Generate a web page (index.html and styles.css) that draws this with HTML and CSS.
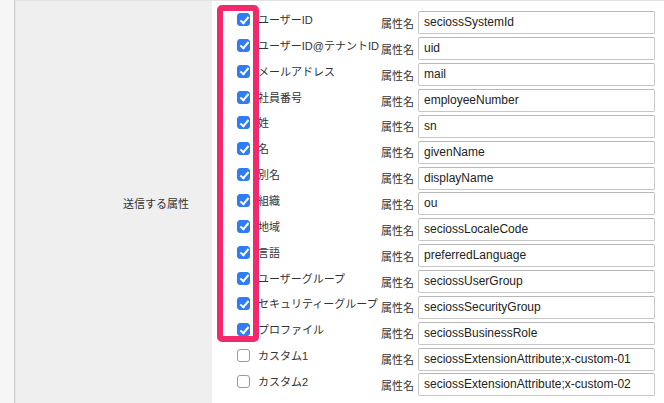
FILE: index.html
```html
<!DOCTYPE html>
<html lang="ja">
<head>
<meta charset="utf-8">
<link rel="stylesheet" href="styles.css">
</head>
<body>
<div class="page">
  <div class="form-table">
    <div class="th">送信する属性</div>
    <div class="td">
      <div class="row"><span class="cb on"></span><span class="lbl">ユーザーID</span><span class="an">属性名</span><span class="inp">seciossSystemId</span></div>
      <div class="row"><span class="cb on"></span><span class="lbl">ユーザーID@テナントID</span><span class="an">属性名</span><span class="inp">uid</span></div>
      <div class="row"><span class="cb on"></span><span class="lbl">メールアドレス</span><span class="an">属性名</span><span class="inp">mail</span></div>
      <div class="row"><span class="cb on"></span><span class="lbl">社員番号</span><span class="an">属性名</span><span class="inp">employeeNumber</span></div>
      <div class="row"><span class="cb on"></span><span class="lbl">姓</span><span class="an">属性名</span><span class="inp">sn</span></div>
      <div class="row"><span class="cb on"></span><span class="lbl">名</span><span class="an">属性名</span><span class="inp">givenName</span></div>
      <div class="row"><span class="cb on"></span><span class="lbl">別名</span><span class="an">属性名</span><span class="inp">displayName</span></div>
      <div class="row"><span class="cb on"></span><span class="lbl">組織</span><span class="an">属性名</span><span class="inp">ou</span></div>
      <div class="row"><span class="cb on"></span><span class="lbl">地域</span><span class="an">属性名</span><span class="inp">seciossLocaleCode</span></div>
      <div class="row"><span class="cb on"></span><span class="lbl">言語</span><span class="an">属性名</span><span class="inp">preferredLanguage</span></div>
      <div class="row"><span class="cb on"></span><span class="lbl">ユーザーグループ</span><span class="an">属性名</span><span class="inp">seciossUserGroup</span></div>
      <div class="row"><span class="cb on"></span><span class="lbl">セキュリティーグループ</span><span class="an">属性名</span><span class="inp">seciossSecurityGroup</span></div>
      <div class="row"><span class="cb on"></span><span class="lbl">プロファイル</span><span class="an">属性名</span><span class="inp">seciossBusinessRole</span></div>
      <div class="row"><span class="cb"></span><span class="lbl">カスタム1</span><span class="an">属性名</span><span class="inp">seciossExtensionAttribute;x-custom-01</span></div>
      <div class="row"><span class="cb"></span><span class="lbl">カスタム2</span><span class="an">属性名</span><span class="inp">seciossExtensionAttribute;x-custom-02</span></div>
    </div>
  </div>
  <div class="highlight"></div>
</div>
</body>
</html>
```

FILE: styles.css
```css
html, body {
  margin: 0;
  padding: 0;
  background: #f6f6f6;
  font-family: "Liberation Sans", "Noto Sans CJK JP", sans-serif;
  color: #333;
  overflow: hidden;
}

.page {
  position: relative;
  width: 664px;
  height: 403px;
  overflow: hidden;
}

.form-table {
  margin-left: 14px;
  width: 700px;
  display: grid;
  grid-template-columns: 197px 1fr;
  border-top: 1px solid #e2e2e2;
  border-left: 1px solid #cfcfcf;
}

.th {
  background: #efefef;
  display: flex;
  align-items: center;
  justify-content: flex-end;
  padding-right: 23px;
  font-size: 11px;
  color: #333;
  border-left: 1px solid #e4e4e4;
}

.td {
  background: #fff;
  padding: 9px 0 7px 25px;
}

.row {
  height: 25.86px;
  display: flex;
  align-items: center;
}

.cb {
  flex: none;
  width: 13px;
  height: 13px;
  box-sizing: border-box;
  border: 1px solid #9a9a9a;
  border-radius: 3px;
  background: #fff;
  position: relative;
  align-self: flex-start;
  margin-top: 3px;
}

.cb.on {
  background: #2f7cf6;
  border-color: #2f7cf6;
}

.cb.on::after {
  content: "";
  position: absolute;
  left: 3.5px;
  top: 0.5px;
  width: 3px;
  height: 7px;
  border: solid #fff;
  border-width: 0 2.2px 2.2px 0;
  transform: rotate(40deg);
}

.lbl {
  flex: none;
  width: 121px;
  margin-left: 8px;
  font-size: 11px;
  white-space: nowrap;
  align-self: flex-start;
  margin-top: 2px;
  line-height: 16px;
}

.an {
  flex: none;
  width: 35px;
  font-size: 11px;
  text-align: right;
  margin-right: 4px;
  white-space: nowrap;
}

.inp {
  flex: none;
  width: 237px;
  height: 23px;
  box-sizing: border-box;
  border: 1px solid #c6c6c6;
  border-top-color: #b8b8b8;
  border-radius: 2px;
  background: #fff;
  padding: 0 5px;
  font-size: 12px;
  line-height: 21px;
  color: #222;
  white-space: nowrap;
  overflow: hidden;
}

.highlight {
  position: absolute;
  left: 217px;
  top: 5px;
  width: 42px;
  height: 337px;
  box-sizing: border-box;
  border: 6px solid #f2296c;
  border-radius: 5px;
}
```
